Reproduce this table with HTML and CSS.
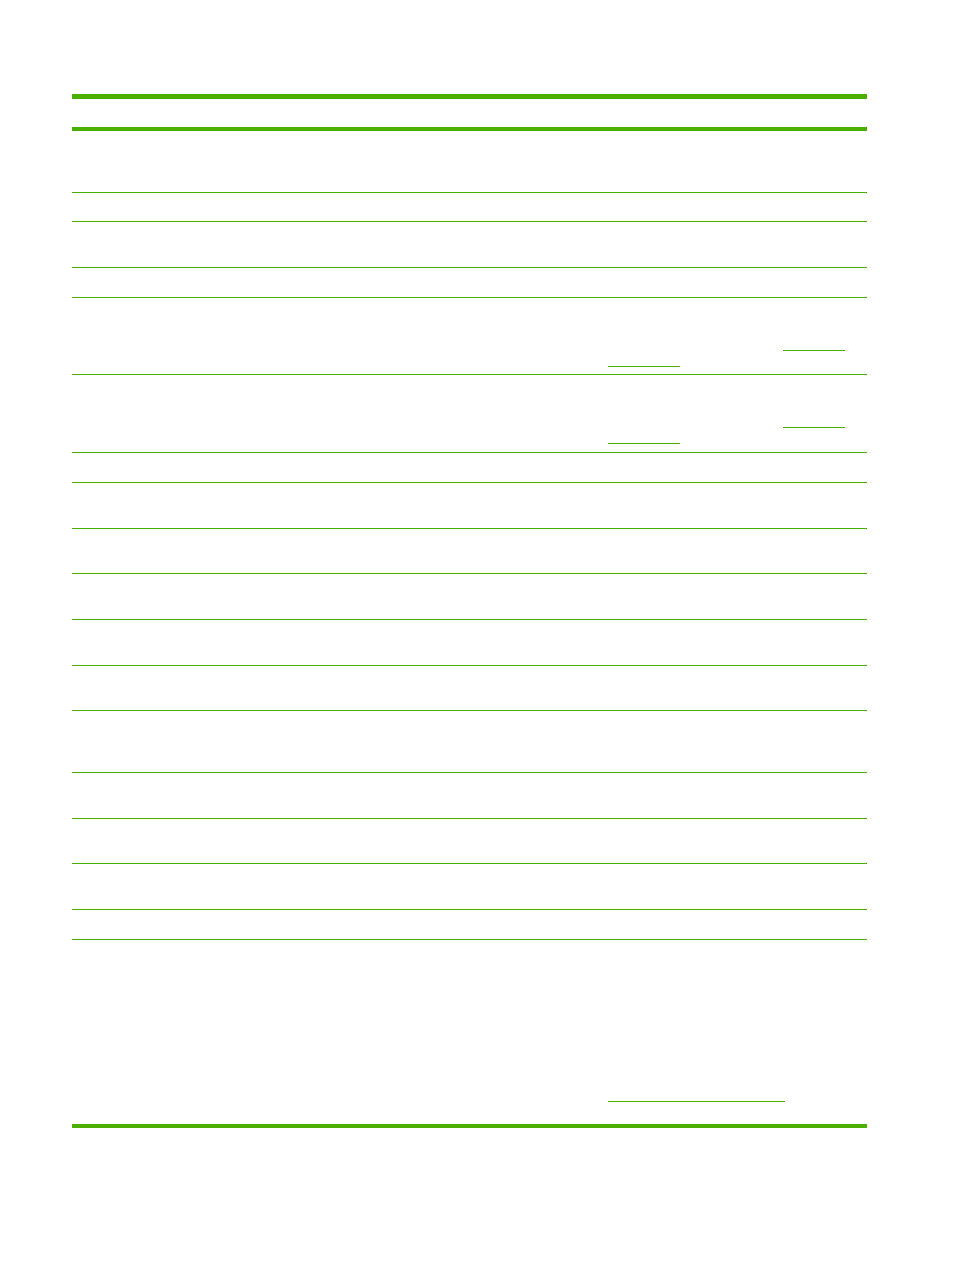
FILE: index.html
```html
<!DOCTYPE html>
<html>
<head>
<meta charset="utf-8">
<link rel="stylesheet" href="styles.css">
</head>
<body>
<div class="page">
  <div class="table">
    <div class="rule-top"></div>
    <div class="head"></div>
    <div class="rule-mid"></div>
    <div class="row h61"></div>
    <div class="row h28"></div>
    <div class="row h45"></div>
    <div class="row h29"></div>
    <div class="row h76">
      <div class="cell-left"></div>
      <div class="cell-right links">
        <span class="link l-a"></span>
        <span class="link l-b"></span>
      </div>
    </div>
    <div class="row h77">
      <div class="cell-left"></div>
      <div class="cell-right links">
        <span class="link l-a"></span>
        <span class="link l-b"></span>
      </div>
    </div>
    <div class="row h29"></div>
    <div class="row h45"></div>
    <div class="row h44"></div>
    <div class="row h45"></div>
    <div class="row h45"></div>
    <div class="row h44"></div>
    <div class="row h61"></div>
    <div class="row h45"></div>
    <div class="row h44"></div>
    <div class="row h45"></div>
    <div class="row h29"></div>
    <div class="row last">
      <div class="cell-left"></div>
      <div class="cell-right links-low">
        <span class="link l-c"></span>
      </div>
    </div>
    <div class="rule-bottom"></div>
  </div>
</div>
</body>
</html>
```

FILE: styles.css
```css
html, body {
  margin: 0;
  padding: 0;
  background: #ffffff;
  font-family: "Liberation Sans", Arial, sans-serif;
}

.page {
  width: 954px;
  height: 1270px;
  padding-top: 94px;
  box-sizing: border-box;
}

.table {
  margin-left: 72px;
  width: 795px;
  display: flex;
  flex-direction: column;
}

.rule-top {
  height: 5px;
  background: #4caf00;
}

.head {
  height: 28px;
}

.rule-mid {
  height: 4px;
  background: #4caf00;
}

.rule-bottom {
  height: 4px;
  background: #4caf00;
}

.row {
  display: grid;
  grid-template-columns: 536px 1fr;
  border-bottom: 1px solid #4dac00;
}

.row.last {
  border-bottom: none;
  height: 184px;
}

.h28 { height: 29px; }
.h29 { height: 30px; }
.h44 { height: 45px; }
.h45 { height: 46px; }
.h61 { height: 62px; }
.h76 { height: 77px; }
.h77 { height: 78px; }

.row { box-sizing: border-box; }
.row.last { box-sizing: content-box; }

.links {
  display: flex;
  flex-direction: column;
  padding-top: 52px;
}

.links-low {
  display: flex;
  flex-direction: column;
  padding-top: 161px;
}

.link {
  display: block;
  height: 1px;
  background: #4caf00;
}

.l-a {
  margin-left: 175px;
  width: 62px;
}

.l-b {
  margin-top: 15px;
  width: 72px;
}

.l-c {
  width: 177px;
}
```
